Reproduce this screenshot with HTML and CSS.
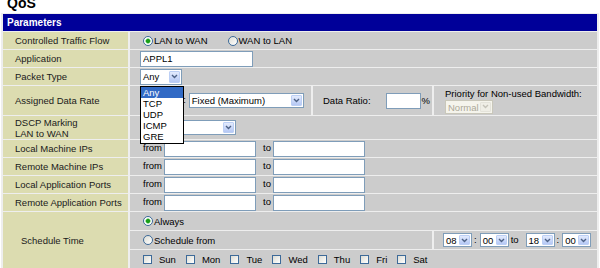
FILE: index.html
```html
<!DOCTYPE html>
<html>
<head>
<meta charset="utf-8">
<title>QoS</title>
<link rel="stylesheet" href="styles.css">
</head>
<body>
<h1 class="title">QoS</h1>
<table class="qos">
  <colgroup><col class="c0"><col class="c1"><col class="c2"><col class="c3"></colgroup>
  <tr><th colspan="4" class="hdr">Parameters</th></tr>
  <tr>
    <td class="lbl">Controlled Traffic Flow</td>
    <td class="val" colspan="3"><label class="rb"><input type="radio" name="flow" checked>LAN to WAN</label><label class="rb rb2"><input type="radio" name="flow">WAN to LAN</label></td>
  </tr>
  <tr>
    <td class="lbl">Application</td>
    <td class="val" colspan="3"><input class="txt app" type="text" value="APPL1"></td>
  </tr>
  <tr>
    <td class="lbl">Packet Type</td>
    <td class="val" colspan="3">
      <span class="dd">
        <span class="sel w-any"><span class="st">Any</span><span class="arr"><svg width="7" height="5" viewBox="0 0 7 5"><path d="M1 1l2.5 2.5L6 1" fill="none" stroke="#4d6185" stroke-width="1.4"/></svg></span></span>
        <span class="list">
          <span class="opt on">Any</span>
          <span class="opt">TCP</span>
          <span class="opt">UDP</span>
          <span class="opt">ICMP</span>
          <span class="opt">GRE</span>
        </span>
      </span>
    </td>
  </tr>
  <tr class="r-rate">
    <td class="lbl">Assigned Data Rate</td>
    <td class="val"><span class="rt">Rate Type:</span><span class="sel w-fixed"><span class="st">Fixed (Maximum)</span><span class="arr"><svg width="7" height="5" viewBox="0 0 7 5"><path d="M1 1l2.5 2.5L6 1" fill="none" stroke="#4d6185" stroke-width="1.4"/></svg></span></span></td>
    <td class="val">Data Ratio:<input class="txt ratio" type="text" value="">%</td>
    <td class="val prio"><div class="ptxt">Priority for Non-used Bandwidth:</div><span class="sel w-norm dis"><span class="st">Normal</span><span class="arr"><svg width="7" height="5" viewBox="0 0 7 5"><path d="M1 1l2.5 2.5L6 1" fill="none" stroke="#c4c3b8" stroke-width="1.4"/></svg></span></span></td>
  </tr>
  <tr class="r-dscp">
    <td class="lbl">DSCP Marking<br>LAN to WAN</td>
    <td class="val" colspan="3"><span class="sel w-dscp"><span class="st"></span><span class="arr"><svg width="7" height="5" viewBox="0 0 7 5"><path d="M1 1l2.5 2.5L6 1" fill="none" stroke="#4d6185" stroke-width="1.4"/></svg></span></span></td>
  </tr>
  <tr>
    <td class="lbl">Local Machine IPs</td>
    <td class="val" colspan="3"><span class="from">from</span><input class="txt ip" type="text"><span class="to">to</span><input class="txt ip" type="text"></td>
  </tr>
  <tr>
    <td class="lbl">Remote Machine IPs</td>
    <td class="val" colspan="3"><span class="from">from</span><input class="txt ip" type="text"><span class="to">to</span><input class="txt ip" type="text"></td>
  </tr>
  <tr>
    <td class="lbl">Local Application Ports</td>
    <td class="val" colspan="3"><span class="from">from</span><input class="txt ip" type="text"><span class="to">to</span><input class="txt ip" type="text"></td>
  </tr>
  <tr>
    <td class="lbl">Remote Application Ports</td>
    <td class="val" colspan="3"><span class="from">from</span><input class="txt ip" type="text"><span class="to">to</span><input class="txt ip" type="text"></td>
  </tr>
  <tr class="r-s">
    <td class="lbl sched" rowspan="3">Schedule Time</td>
    <td class="val" colspan="3"><label class="rb"><input type="radio" name="sch" checked>Always</label></td>
  </tr>
  <tr class="r-s">
    <td class="val" colspan="2"><label class="rb"><input type="radio" name="sch">Schedule from</label></td>
    <td class="val times">
      <span class="sel w-t"><span class="st">08</span><span class="arr"><svg width="7" height="5" viewBox="0 0 7 5"><path d="M1 1l2.5 2.5L6 1" fill="none" stroke="#4d6185" stroke-width="1.4"/></svg></span></span><span class="colon">:</span><span class="sel w-t"><span class="st">00</span><span class="arr"><svg width="7" height="5" viewBox="0 0 7 5"><path d="M1 1l2.5 2.5L6 1" fill="none" stroke="#4d6185" stroke-width="1.4"/></svg></span></span><span class="tto">to</span><span class="sel w-t"><span class="st">18</span><span class="arr"><svg width="7" height="5" viewBox="0 0 7 5"><path d="M1 1l2.5 2.5L6 1" fill="none" stroke="#4d6185" stroke-width="1.4"/></svg></span></span><span class="colon">:</span><span class="sel w-t"><span class="st">00</span><span class="arr"><svg width="7" height="5" viewBox="0 0 7 5"><path d="M1 1l2.5 2.5L6 1" fill="none" stroke="#4d6185" stroke-width="1.4"/></svg></span></span>
    </td>
  </tr>
  <tr class="r-s">
    <td class="val days" colspan="3"><label class="cb"><input type="checkbox">Sun</label><label class="cb"><input type="checkbox">Mon</label><label class="cb"><input type="checkbox">Tue</label><label class="cb"><input type="checkbox">Wed</label><label class="cb"><input type="checkbox">Thu</label><label class="cb"><input type="checkbox">Fri</label><label class="cb"><input type="checkbox">Sat</label></td>
  </tr>
</table>
</body>
</html>
```

FILE: styles.css
```css
body {
  margin: 0;
  background: #ffffff;
  font-family: "Liberation Sans", Arial, sans-serif;
  font-size: 9.5px;
  color: #111111;
}

.title {
  margin: -4px 0 0 7px;
  height: 14px;
  font-size: 14px;
  line-height: 14px;
  font-weight: bold;
  color: #000000;
}

.qos {
  margin: 3px 0 0 1px;
  width: 598px;
  table-layout: fixed;
  border-collapse: separate;
  border-spacing: 2px 1px;
  background: #eeeeee;
}

.c0 { width: 125px; }
.c1 { width: 181px; }
.c2 { width: 119px; }
.c3 { width: 163px; }

.qos td, .qos th {
  padding: 0;
  height: 17px;
  line-height: 11px;
  vertical-align: middle;
  white-space: nowrap;
  text-align: left;
}

.hdr {
  background: #000099;
  color: #ffffff;
  font-weight: bold;
  font-size: 10px;
  padding-left: 4px !important;
}

.lbl {
  background: #dcdcb0;
  padding-left: 12px !important;
  color: #1a1a1a;
}

.sched { padding-left: 18px !important; }

.val {
  background: #cccccc;
  padding-left: 10px !important;
  color: #000000;
}

.r-rate td { height: 29px; }
.r-dscp td { height: 23px; }
.r-s td { height: 18px; }

/* radios */
.rb {
  display: inline-flex;
  align-items: center;
  vertical-align: middle;
}
.rb input {
  -webkit-appearance: none;
  appearance: none;
  box-sizing: border-box;
  width: 10px;
  height: 10px;
  margin: 0 1px 0 3px;
  border: 1px solid #3d6a99;
  border-radius: 50%;
  background: linear-gradient(135deg, #dcdcd4, #ffffff);
}
.rb input:checked {
  background: radial-gradient(circle, #1a9e1a 0 1.6px, #7fd47f 2.3px, #ffffff 3px);
}
.rb2 { margin-left: 17px; }

/* checkboxes */
.cb {
  display: inline-flex;
  align-items: center;
  vertical-align: middle;
  margin-right: 7px;
}
.cb input {
  -webkit-appearance: none;
  appearance: none;
  box-sizing: border-box;
  width: 9px;
  height: 9px;
  margin: 0 7px 0 3px;
  border: 1px solid #3d6a99;
  background: linear-gradient(135deg, #dcdcd4, #ffffff);
}

/* text inputs */
.txt {
  box-sizing: border-box;
  height: 16px;
  margin: 0;
  padding: 0 2px;
  border: 1px solid #7f9db9;
  background: #ffffff;
  font-family: "Liberation Sans", Arial, sans-serif;
  font-size: 9.5px;
  color: #000000;
  vertical-align: middle;
  outline: none;
}
.app { width: 113px; }
.ratio { width: 35px; margin: 0 1px 0 15px; }
.ip { width: 92px; }

.from { margin: 0 2px 0 3px; }
.to { margin: 0 2px 0 7px; }

.rt { margin-left: 0; }

/* select look-alikes */
.sel {
  display: inline-flex;
  align-items: stretch;
  box-sizing: border-box;
  height: 15px;
  padding: 1px;
  border: 1px solid #7f9db9;
  background: #ffffff;
  vertical-align: middle;
  color: #000000;
}
.st {
  flex: 1;
  padding-left: 1px;
  line-height: 11px;
  overflow: hidden;
}
.arr {
  box-sizing: border-box;
  width: 11px;
  display: flex;
  align-items: center;
  justify-content: center;
  border: 1px solid #bccff5;
  border-radius: 1px;
  background: linear-gradient(#e3ebfd, #b5c8f5);
}
.w-any { width: 42px; height: 16px; }
.w-fixed { width: 115px; margin-left: 3px; }
.w-norm { width: 48px; height: 14px; }
.w-dscp { width: 96px; }
.w-t { width: 29px; height: 14px; }

.dis {
  border-color: #c9c7ba;
  background: #f5f4ec;
  color: #aca899;
}
.dis .arr {
  border-color: #e4e3da;
  background: #efeee6;
}

.prio { padding-left: 11px !important; }
.ptxt { line-height: 11px; margin-bottom: 1px; }

.times { padding-left: 9px !important; }
.colon { margin: 0 3px 0 2px; }
.tto { margin: 0 7px 0 2px; }

/* open dropdown list */
.dd {
  position: relative;
  display: inline-block;
  vertical-align: middle;
  height: 16px;
}
.list {
  position: absolute;
  left: 0;
  top: 17px;
  z-index: 5;
  box-sizing: border-box;
  width: 44px;
  padding-bottom: 1px;
  border: 1px solid #000000;
  background: #ffffff;
  font-size: 9.5px;
}
.opt {
  display: block;
  height: 11px;
  line-height: 11px;
  padding-left: 2px;
  color: #000000;
}
.opt.on {
  background: #316ac5;
  color: #ffffff;
}
```
